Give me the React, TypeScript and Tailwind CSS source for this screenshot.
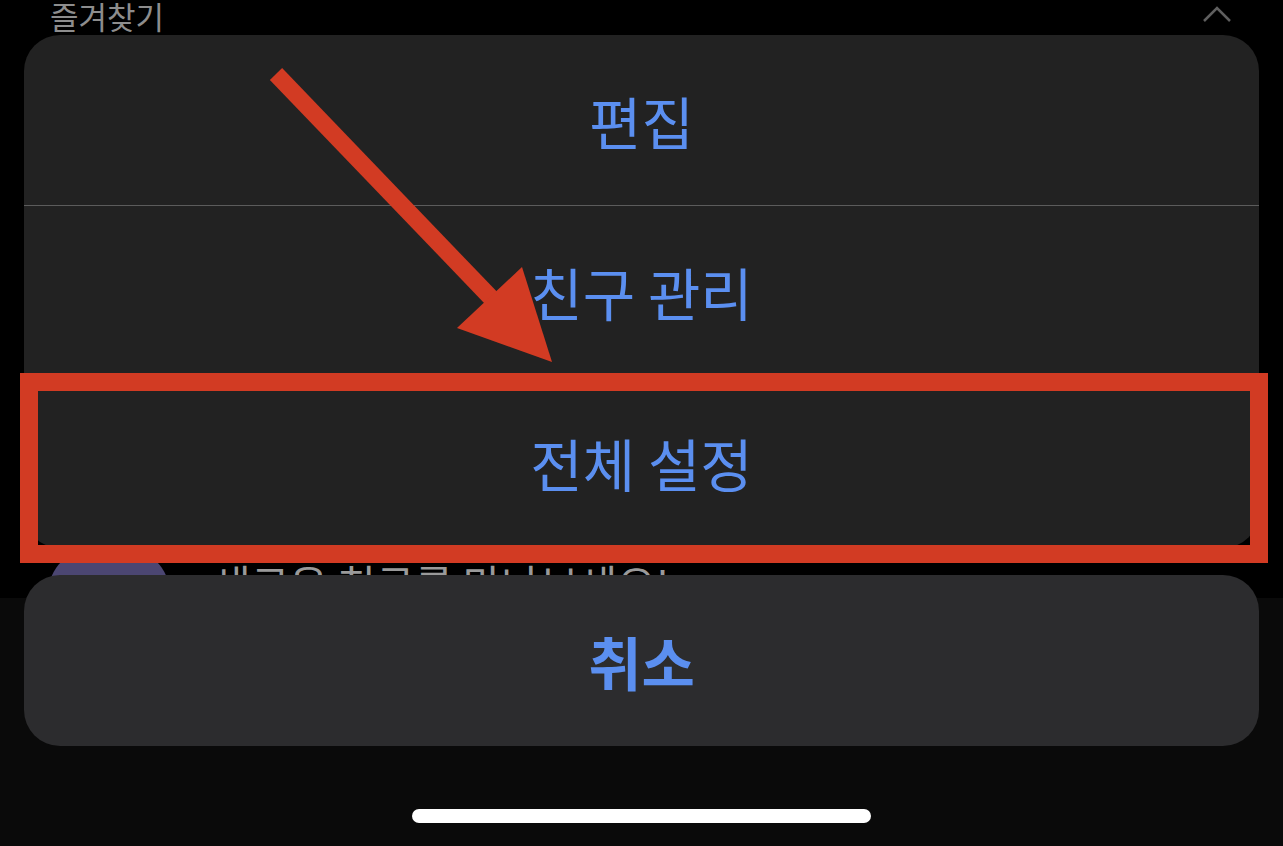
const font = { fontFamily: '"Noto Sans CJK KR", "Noto Sans", sans-serif' };

function SheetRow({ label, divider }: { label: string; divider?: boolean }) {
  return (
    <div
      className={`flex h-[171px] items-center justify-center ${divider ? "border-b border-[#5c5c5c]" : ""}`}
    >
      <span className="text-[57px] leading-none text-[#5b8ff0]">{label}</span>
    </div>
  );
}

export default function App() {
  return (
    <div className="relative h-[846px] w-[1283px] overflow-hidden bg-black" style={font}>
      {/* background screen */}
      <div className="flex h-full flex-col">
        <div className="flex h-[598px] flex-col overflow-hidden">
          <div className="flex h-[36px] items-center justify-between pl-[50px] pr-[51px]">
            <span className="text-[31px] leading-none text-[#8d8d8d]">즐겨찾기</span>
            <svg width="30" height="18" viewBox="0 0 30 18" className="-mt-[4px]">
              <polyline points="2,16 15,3 28,16" fill="none" stroke="#5f5f5f" strokeWidth="2.5" />
            </svg>
          </div>
          <div className="flex items-start gap-[42px] pl-[48px] pt-[517px]">
            <div className="h-[122px] w-[122px] shrink-0 rounded-[46px] bg-[#4b4672]" />
            <span className="mt-[14px] text-[42px] leading-none text-[#9a9a9a]">
              새로운 친구를 만나보세요!
            </span>
          </div>
        </div>
        <div className="flex-1 bg-[#0a0a0a]" />
      </div>

      {/* action sheet */}
      <div className="absolute inset-0 flex flex-col px-[24px] pt-[35px]">
        <div className="flex flex-col overflow-hidden rounded-[36px] bg-[#222222]">
          <SheetRow label="편집" divider />
          <SheetRow label="친구 관리" divider />
          <SheetRow label="전체 설정" />
        </div>
        <div className="mt-[27px] flex h-[171px] items-center justify-center rounded-[36px] bg-[#2c2c2e]">
          <span className="text-[58px] font-semibold leading-none text-[#5b8ff0]">취소</span>
        </div>
        <div className="mt-[63px] flex justify-center">
          <div className="h-[14px] w-[459px] rounded-full bg-white" />
        </div>
      </div>

      {/* annotation */}
      <div className="absolute left-[20px] top-[373px] h-[190px] w-[1248px] border-[18px] border-[#d23b23]" />
      <svg className="absolute left-0 top-0" width="1283" height="846" viewBox="0 0 1283 846">
        <line x1="276" y1="74" x2="495" y2="302" stroke="#d23b23" strokeWidth="17" />
        <polygon points="457,328 522,267 552,362" fill="#d23b23" />
      </svg>
    </div>
  );
}
